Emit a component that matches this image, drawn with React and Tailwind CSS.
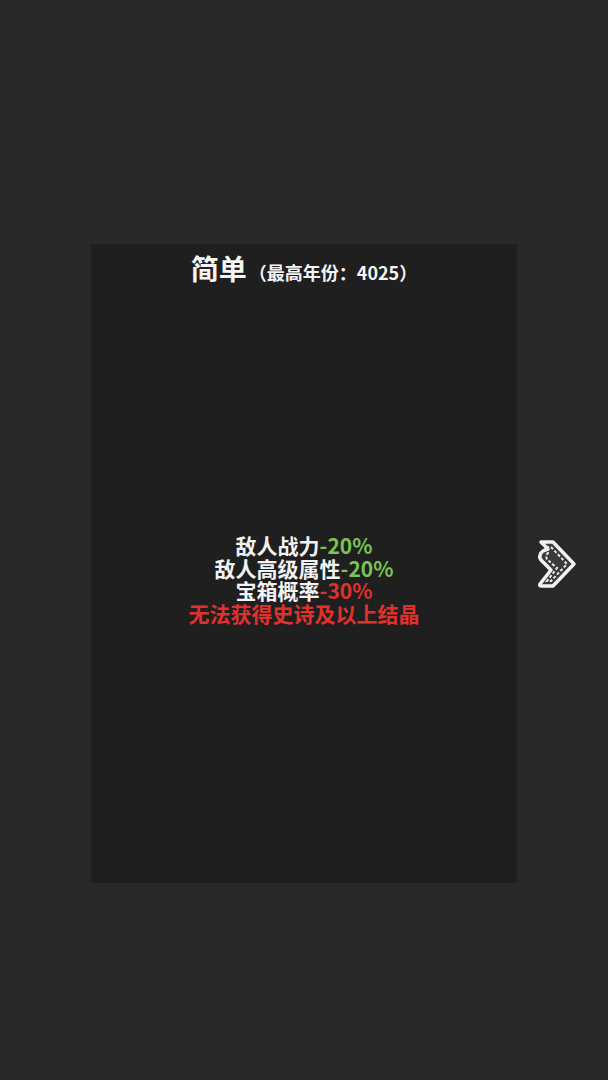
import React from "react";

const font = { fontFamily: '"Noto Sans CJK SC", "Noto Sans", sans-serif' };

const Arrow = () => (
  <svg width="42" height="50" viewBox="0 0 42 50" className="ml-[19px]">
    <path
      d="M5 3 H17 L38 25 L17 47 H5 Q3 47 4 45 L15 31 Q9 25 6 22 Q3 19 4 16 Q5 12 12 10 Z"
      fill="#3a3a3a"
      stroke="#f2f2f2"
      strokeWidth="3.5"
      strokeLinejoin="round"
    />
    <path
      d="M10 8 H15 L31 25 L15 42 H11 L21 29 Q15 24 11 20 Q9 17 12 14 Z"
      fill="none"
      stroke="#e8e8e8"
      strokeWidth="2"
      strokeDasharray="3 2"
    />
  </svg>
);

const Line = ({ children, className = "" }) => (
  <div className={`h-[22.5px] leading-[22.5px] ${className}`}>{children}</div>
);

export default function App() {
  return (
    <div className="w-[608px] h-[1080px] bg-[#282828] pt-[244px]" style={font}>
      <div className="flex items-center">
        <div className="ml-[91px] w-[426px] h-[639px] bg-[#1f1f1f] flex flex-col items-center">
          <div className="mt-[6px] flex items-baseline text-[#f5f5f5] font-bold">
            <span className="text-[28px] leading-[36px]">简单</span>
            <span className="text-[18px] ml-[2px]">（最高年份：4025）</span>
          </div>
          <div className="mt-[248px] flex flex-col items-center font-bold text-[21px] text-[#f2f2f2]">
            <Line>
              敌人战力<span className="text-[#79c452]">-20%</span>
            </Line>
            <Line>
              敌人高级属性<span className="text-[#79c452]">-20%</span>
            </Line>
            <Line>
              宝箱概率<span className="text-[#e0312c]">-30%</span>
            </Line>
            <Line className="text-[#e0312c]">无法获得史诗及以上结晶</Line>
          </div>
        </div>
        <Arrow />
      </div>
    </div>
  );
}
